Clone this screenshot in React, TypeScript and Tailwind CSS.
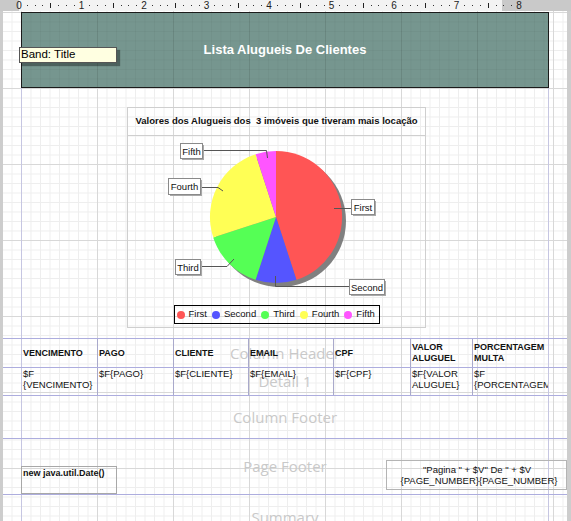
import React from "react";

const sans = "font-['Liberation_Sans',Arial,sans-serif]";
const bandLabel =
    "pointer-events-none absolute inset-0 flex items-center justify-center font-['Open_Sans','DejaVu_Sans',sans-serif] text-[15px] text-[#c9c9c9]";

function Ruler() {
    const marks = [];
    for (let i = 1; i < 64; i++) {
        const x = 19 + (i * 62.5) / 8;
        if (i % 8 === 0) continue;
        if (i % 4 === 0) {
            marks.push(<rect key={i} x={Math.round(x)} y={3} width={1} height={5} fill="#222" />);
        } else {
            marks.push(<rect key={i} x={Math.round(x)} y={5} width={1} height={1} fill="#333" />);
        }
    }
    return (
        <svg width="571" height="11" className="block">
            <rect x="0" y="0" width="571" height="11" fill="#f3f3f3" />
            <rect x="0" y="0" width="19" height="11" fill="#c9c9c9" />
            <rect x="502" y="0" width="69" height="11" fill="#c9c9c9" />
            {marks}
            {[0, 1, 2, 3, 4, 5, 6, 7, 8].map((n) => (
                <text
                    key={n}
                    x={19 + n * 62.5}
                    y={9}
                    fontSize="10"
                    textAnchor="middle"
                    fill="#222"
                    fontFamily="Liberation Sans, Arial, sans-serif"
                >
                    {n}
                </text>
            ))}
        </svg>
    );
}

function Label({ x, y, w, h, text }: { x: number; y: number; w: number; h: number; text: string }) {
    return (
        <g>
            <rect x={x + 2} y={y + 2} width={w} height={h} fill="#a8a8a8" />
            <rect x={x + 0.5} y={y + 0.5} width={w} height={h} fill="#ffffff" stroke="#8a8a8a" />
            <text
                x={x + w / 2 + 0.5}
                y={y + h / 2 + 4}
                fontSize="9.5"
                textAnchor="middle"
                fill="#111"
                fontFamily="Liberation Sans, Arial, sans-serif"
            >
                {text}
            </text>
        </g>
    );
}

function PieChart() {
    const legend = [
        { name: "First", color: "bg-[#ff5555]" },
        { name: "Second", color: "bg-[#5555ff]" },
        { name: "Third", color: "bg-[#55ff55]" },
        { name: "Fourth", color: "bg-[#ffff55]" },
        { name: "Fifth", color: "bg-[#ff55ff]" },
    ];
    return (
        <div className="ml-[105px] mt-[18px] flex h-[221px] w-[299px] flex-col border border-[#cfcfcf]">
            <div className="flex h-[28px] items-center justify-center whitespace-pre border-b border-[#cfcfcf] text-[9.5px] font-bold text-[#111]">
                {"Valores dos Alugueis dos  3 imóveis que tiveram mais locação"}
            </div>
            <svg width="297" height="169" className="block">
                <circle cx="152" cy="85" r="66" fill="#808080" />
                <path d="M148 81 L148 15 A66 66 0 0 1 168.4 143.8 Z" fill="#ff5555" />
                <path d="M148 81 L168.4 143.8 A66 66 0 0 1 127.6 143.8 Z" fill="#5555ff" />
                <path d="M148 81 L127.6 143.8 A66 66 0 0 1 85.2 101.4 Z" fill="#55ff55" />
                <path d="M148 81 L85.2 101.4 A66 66 0 0 1 127.6 18.2 Z" fill="#ffff55" />
                <path d="M148 81 L127.6 18.2 A66 66 0 0 1 148 15 Z" fill="#ff55ff" />
                <g stroke="#555" strokeWidth="1" fill="none">
                    <polyline points="74,14.5 138.5,14.5 139.5,22" />
                    <polyline points="72,51.5 90,51.5 95,55" />
                    <polyline points="206,72.5 223,72.5" />
                    <polyline points="72,130.5 99,130.5 106,123" />
                    <polyline points="147.5,140 147.5,150.5 221,150.5" />
                </g>
                <Label x={52} y={7} w={22} h={15} text="Fifth" />
                <Label x={40} y={42} w={32} h={16} text="Fourth" />
                <Label x={223} y={63} w={23} h={15} text="First" />
                <Label x={47} y={123} w={25} h={15} text="Third" />
                <Label x={221} y={143} w={35} h={15} text="Second" />
            </svg>
            <div className="flex h-[19px] w-[206px] items-center gap-[5px] self-center border border-black pl-[2px] text-[9.5px] text-[#111]">
                {legend.map((l) => (
                    <div key={l.name} className="flex items-center gap-[4px]">
                        <span className={`h-[8px] w-[8px] rounded-full ${l.color}`} />
                        <span>{l.name}</span>
                    </div>
                ))}
            </div>
        </div>
    );
}

const columns = [
    { w: "w-[76px]", head: ["VENCIMENTO"], field: ["$F", "{VENCIMENTO}"] },
    { w: "w-[76px]", head: ["PAGO"], field: ["$F{PAGO}"] },
    { w: "w-[75px]", head: ["CLIENTE"], field: ["$F{CLIENTE}"] },
    { w: "w-[85px]", head: ["EMAIL"], field: ["$F{EMAIL}"] },
    { w: "w-[77px]", head: ["CPF"], field: ["$F{CPF}"] },
    { w: "w-[62px]", head: ["VALOR", "ALUGUEL"], field: ["$F{VALOR", "ALUGUEL}"] },
    { w: "w-[75px]", head: ["PORCENTAGEM", "MULTA"], field: ["$F", "{PORCENTAGEM}"] },
];

export default function App() {
    const inner = "relative ml-[18px] h-full w-[528px] border-x border-[#c6c6e2]";
    const band = "relative border-b border-[#adadde]";
    return (
        <div className={`h-[521px] w-[571px] overflow-hidden bg-white ${sans}`}>
            <Ruler />
            <div className="flex h-[510px]">
                <div className="w-[3px] bg-[#cdcdcd]" />
                <div className="w-[564px] [background-image:linear-gradient(to_right,#d8d8d8_1px,transparent_1px),linear-gradient(to_bottom,#d8d8d8_1px,transparent_1px),linear-gradient(to_right,#eeeeee_1px,transparent_1px),linear-gradient(to_bottom,#eeeeee_1px,transparent_1px)] [background-size:76px_76px,76px_76px,9.5px_9.5px,9.5px_9.5px] [background-position:18px_1px,18px_1px,8.5px_1px,8.5px_1px]">
                    {/* Title */}
                    <div className="relative h-[77px] pt-[1px]">
                        <div className="ml-[18px] flex h-[76px] w-[528px] items-center justify-center border border-[#1b1b1b] bg-[#76968f] [background-image:linear-gradient(to_right,rgba(0,0,0,0.07)_1px,transparent_1px),linear-gradient(to_right,rgba(0,0,0,0.035)_1px,transparent_1px),linear-gradient(to_bottom,rgba(0,0,0,0.035)_1px,transparent_1px)] [background-size:76px_76px,9.5px_9.5px,9.5px_9.5px] [background-position:75px_0px,8.5px_0px,0px_8.5px]">
                            <span className="text-[13px] font-bold text-white">Lista Alugueis De Clientes</span>
                        </div>
                        <div className="absolute left-[16px] top-[36px] flex h-[16px] w-[98px] items-center border border-[#555] bg-[#ffffe1] pl-[1px] text-[11.5px] text-black shadow-[3px_3px_1px_rgba(0,0,0,0.35)]">
                            Band: Title
                        </div>
                    </div>

                    {/* Page header */}
                    <div className={`${band} h-[251px]`}>
                        <div className={`${inner} pt-px`}>
                            <PieChart />
                        </div>
                    </div>

                    {/* Column header */}
                    <div className={`${band} h-[29px]`}>
                        <div className={inner}>
                            <div className={bandLabel}>Column Header</div>
                            <div className="relative flex h-full text-[9px] font-bold leading-[11px] text-[#111]">
                                {columns.map((c, i) => (
                                    <div
                                        key={i}
                                        className={`${c.w} flex shrink-0 flex-col justify-center whitespace-nowrap pl-[1px] ${i < columns.length - 1 ? "border-r border-[#a9a9cb]" : ""}`}
                                    >
                                        {c.head.map((t) => (
                                            <span key={t}>{t}</span>
                                        ))}
                                    </div>
                                ))}
                            </div>
                        </div>
                    </div>

                    {/* Detail */}
                    <div className={`${band} h-[28px]`}>
                        <div className={inner}>
                            <div className={bandLabel}>Detail 1</div>
                            <div className="relative flex h-full text-[9.5px] leading-[11px] text-[#111]">
                                {columns.map((c, i) => (
                                    <div
                                        key={i}
                                        className={`${c.w} flex shrink-0 flex-col overflow-hidden whitespace-nowrap pl-[1px] ${i < columns.length - 1 ? "border-r border-[#a9a9cb]" : ""}`}
                                    >
                                        {c.field.map((t) => (
                                            <span key={t}>{t}</span>
                                        ))}
                                    </div>
                                ))}
                            </div>
                        </div>
                    </div>

                    {/* Column footer */}
                    <div className={`${band} h-[43px]`}>
                        <div className={inner}>
                            <div className={bandLabel}>Column Footer</div>
                        </div>
                    </div>

                    {/* Page footer */}
                    <div className={`${band} h-[56px]`}>
                        <div className={inner}>
                            <div className={bandLabel}>Page Footer</div>
                            <div className="relative flex items-start text-[#111]">
                                <div className="-ml-px mt-[27px] h-[28px] w-[96px] shrink-0 border border-[#a8a8a8] pl-px pt-[1px] text-[9px] font-bold leading-[11px]">
                                    new java.util.Date()
                                </div>
                                <div className="ml-[269px] mt-[21px] flex h-[30px] w-[181px] shrink-0 flex-col items-center justify-center border border-[#b4b4b4] text-[9.5px] leading-[11.5px]">
                                    <span className="pl-[1px]">"Pagina " + $V" De " + $V</span>
                                    <span className="pl-[5px]">{"{PAGE_NUMBER}{PAGE_NUMBER}"}</span>
                                </div>
                            </div>
                        </div>
                    </div>

                    {/* Summary */}
                    <div className="relative h-[45px]">
                        <div className={inner}>
                            <div className={bandLabel}>Summary</div>
                        </div>
                    </div>
                </div>
                <div className="w-[4px] bg-[#cdcdcd]" />
            </div>
        </div>
    );
}
